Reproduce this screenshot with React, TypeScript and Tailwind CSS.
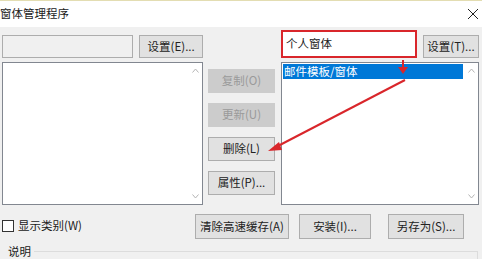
import React from 'react';

const font = { fontFamily: '"Noto Sans CJK SC", "Microsoft YaHei", sans-serif' };

function Btn({ label, disabled, className = '' }: { label: string; disabled?: boolean; className?: string }) {
  return (
    <div
      className={`flex items-center justify-center border text-[11.5px] leading-none ${
        disabled ? 'border-[#cccccc] bg-[#cccccc] text-[#9a9a9a]' : 'border-[#adadad] bg-[#e1e1e1] text-[#222]'
      } ${className}`}
    >
      {label}
    </div>
  );
}

function ListBox({ children, className = '' }: { children?: React.ReactNode; className?: string }) {
  return (
    <div className={`flex border border-[#828790] bg-white ${className}`}>
      <div className="flex-1 p-[1px]">{children}</div>
      <div className="flex w-[14px] flex-col items-center justify-between bg-white py-[5px] text-[#b5b5b5]">
        <svg width="7" height="5" viewBox="0 0 7 5"><path d="M0.5 4.5 L3.5 1 L6.5 4.5" fill="none" stroke="currentColor" /></svg>
        <svg width="7" height="5" viewBox="0 0 7 5"><path d="M0.5 0.5 L3.5 4 L6.5 0.5" fill="none" stroke="currentColor" /></svg>
      </div>
    </div>
  );
}

export default function App() {
  return (
    <div className="relative h-[259px] w-[482px] overflow-hidden bg-[#f0f0f0] text-[#1a1a1a]" style={font}>
      {/* title bar */}
      <div className="flex h-[27px] items-center justify-between border-t border-[#e3ddb2] bg-white pr-[2px]">
        <span className="text-[11.5px]">窗体管理程序</span>
        <svg width="12" height="12" viewBox="0 0 12 12" className="mr-[1px]">
          <path d="M1 1 L11 11 M11 1 L1 11" stroke="#222" strokeWidth="1" />
        </svg>
      </div>

      <div className="flex h-[183px] pl-[2px] pt-[4px]">
        {/* left column */}
        <div className="flex w-[201px] flex-col">
          <div className="flex h-[28px] items-end pb-[1px]">
            <div className="h-[23px] w-[132px] border border-[#adadad] bg-[#f0f0f0]" />
            <Btn label="设置(E)..." className="ml-[6px] h-[23px] w-[64px]" />
          </div>
          <ListBox className="mt-[3px] h-[143px]" />
        </div>

        {/* middle buttons */}
        <div className="ml-[5px] flex w-[67px] flex-col gap-[10px] pt-[38px]">
          <Btn label="复制(O)" disabled className="h-[24px]" />
          <Btn label="更新(U)" disabled className="h-[24px]" />
          <Btn label="删除(L)" className="h-[24px]" />
          <Btn label="属性(P)..." className="h-[24px]" />
        </div>

        {/* right column */}
        <div className="ml-[6px] flex w-[198px] flex-col">
          <div className="flex h-[28px] items-end pb-[1px]">
            <div className="flex h-[28px] w-[136px] items-center border-2 border-[#d9262b] bg-white px-[3px] text-[11.5px]">
              个人窗体
            </div>
            <Btn label="设置(T)..." className="ml-[6px] h-[23px] w-[56px]" />
          </div>
          <ListBox className="mt-[3px] h-[143px]">
            <div className="flex h-[15px] items-center bg-[#0078d7] pl-[1px] text-[11.5px] text-white">邮件模板/窗体</div>
          </ListBox>
        </div>
      </div>

      {/* bottom row */}
      <div className="mt-[4px] flex h-[25px] items-center pl-[2px]">
        <div className="flex w-[193px] items-center gap-[4px] self-start pt-[6px]">
          <div className="h-[12px] w-[12px] border border-[#333] bg-white" />
          <span className="text-[11.5px] leading-none">显示类别(W)</span>
        </div>
        <div className="flex gap-[10px]">
          <Btn label="清除高速缓存(A)" className="h-[25px] w-[94px]" />
          <Btn label="安装(I)..." className="h-[25px] w-[72px]" />
          <Btn label="另存为(S)..." className="ml-[7px] h-[25px] w-[76px]" />
        </div>
      </div>

      {/* group box */}
      <div className="mt-[5px] flex items-start pl-[8px]">
        <span className="text-[11.5px] leading-[14px]">说明</span>
        <div className="ml-[3px] mr-[4px] mt-[7px] h-[10px] flex-1 border-r border-t border-[#dcdcdc]" />
      </div>

      {/* annotation arrows */}
      <svg className="pointer-events-none absolute left-0 top-0" width="482" height="259">
        <line x1="403" y1="60" x2="403" y2="69" stroke="#d9262b" strokeWidth="2" />
        <polygon points="398,67 408,67 403,74" fill="#d9262b" />
        <line x1="405" y1="80" x2="276" y2="147" stroke="#d9262b" strokeWidth="2" />
        <polygon points="268,151 279,142 282,150" fill="#d9262b" />
      </svg>
    </div>
  );
}
